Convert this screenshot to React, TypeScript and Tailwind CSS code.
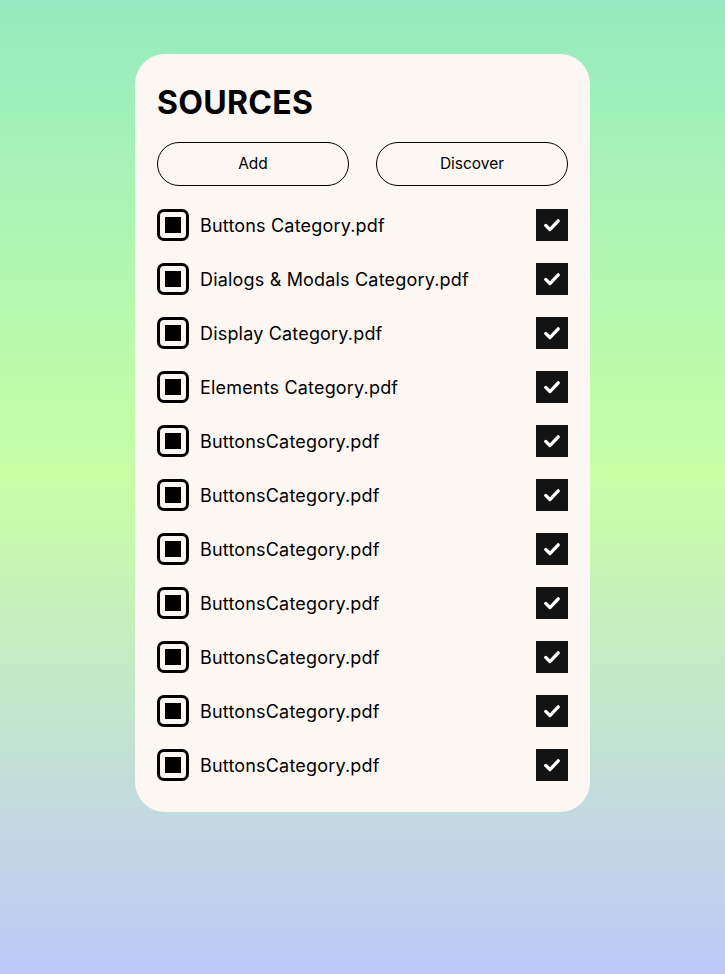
import React from 'react';

const files = [
  'Buttons Category.pdf',
  'Dialogs & Modals Category.pdf',
  'Display Category.pdf',
  'Elements Category.pdf',
  'ButtonsCategory.pdf',
  'ButtonsCategory.pdf',
  'ButtonsCategory.pdf',
  'ButtonsCategory.pdf',
  'ButtonsCategory.pdf',
  'ButtonsCategory.pdf',
  'ButtonsCategory.pdf',
];

const FileIcon: React.FC = () => (
  <div className="w-8 h-8 shrink-0 rounded-[7px] border-[3px] border-black flex items-center justify-center">
    <div className="w-4 h-4 bg-black" />
  </div>
);

const CheckBox: React.FC = () => (
  <div className="w-8 h-8 shrink-0 bg-[#131313] flex items-center justify-center">
    <svg width="20" height="20" viewBox="0 0 24 24" fill="none">
      <path d="M4.5 12.5l5 5L19.5 7" stroke="white" strokeWidth="4" strokeLinecap="round" strokeLinejoin="round" />
    </svg>
  </div>
);

const App: React.FC = () => {
  return (
    <div
      className="min-h-screen w-full bg-[linear-gradient(180deg,#95ebc0_0%,#c8ffa6_49%,#bfc8fa_100%)] pt-[54px] pb-10"
      style={{ fontFamily: 'Inter, "Noto Sans", sans-serif' }}
    >
      <div className="mx-auto w-[455px] bg-[#fdf7f4] rounded-[30px] px-[22px] pt-[30px] pb-[31px]">
        {/* Title */}
        <h1 className="text-[32px] leading-[38px] font-bold text-black tracking-[0.01em]">SOURCES</h1>

        {/* Actions */}
        <div className="mt-[20px] flex gap-[27px]">
          <button className="flex-1 h-[44px] rounded-full border border-black text-[15.5px] text-black">
            Add
          </button>
          <button className="flex-1 h-[44px] rounded-full border border-black text-[15.5px] text-black">
            Discover
          </button>
        </div>

        {/* File list */}
        <ul className="mt-[23px] flex flex-col gap-[22px]">
          {files.map((name, i) => (
            <li key={i} className="flex items-center h-8">
              <FileIcon />
              <span className="ml-[11px] flex-1 text-[18px] tracking-[0.01em] text-black">{name}</span>
              <CheckBox />
            </li>
          ))}
        </ul>
      </div>
    </div>
  );
};

export default App;
